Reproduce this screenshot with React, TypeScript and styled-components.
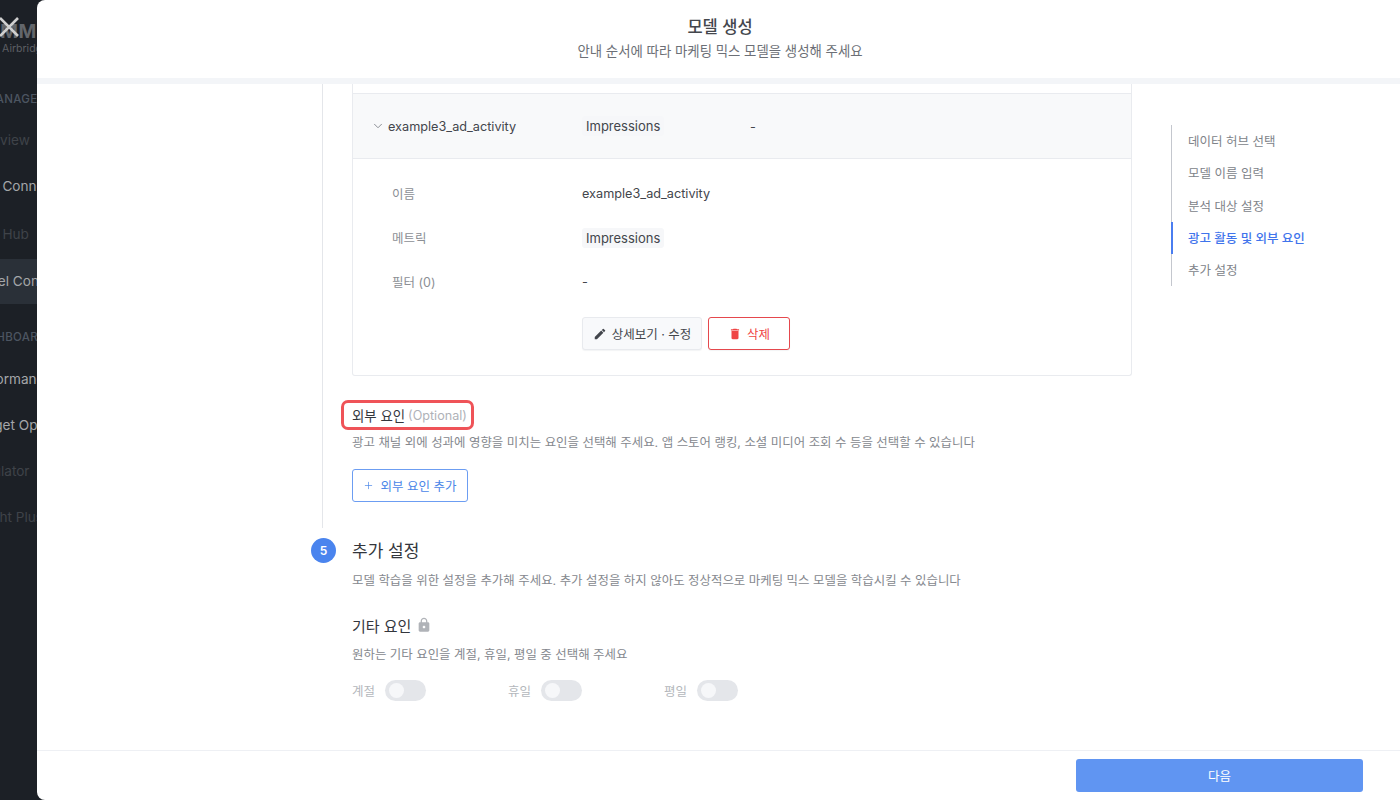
import React from "react";
import styled, { createGlobalStyle } from "styled-components";
import { MdEdit, MdDelete, MdLock } from "react-icons/md";
import { ChevronDown, Plus } from "lucide-react";

const GlobalStyle = createGlobalStyle`
  html, body {
    margin: 0;
    height: 100%;
    overflow: hidden;
    background: #1c2026;
    font-family: Inter, "Noto Sans CJK KR", "Noto Sans", sans-serif;
  }
  * { box-sizing: border-box; }
`;

const Page = styled.div`
  position: relative;
  width: 1400px;
  height: 800px;
  overflow: hidden;
  background: #1c2026;
`;

/* sidebar sitting behind the modal, almost fully covered */
const Sidebar = styled.aside`
  width: 37px;
  height: 800px;
  overflow: hidden;
  white-space: nowrap;
  display: flex;
  flex-direction: column;
  padding-top: 22px;
`;

const Logo = styled.div`
  margin-left: -18px;
  height: 20px;
  line-height: 20px;
  font-size: 19px;
  font-weight: 700;
  letter-spacing: 0.5px;
  color: #63666b;
`;

const LogoSub = styled.div`
  margin: 0 0 0 -13px;
  height: 14px;
  line-height: 14px;
  font-size: 10.5px;
  color: #5c5f64;
`;

const SectionLabel = styled.div<{ $shift: number; $top: number }>`
  margin: ${(p) => p.$top}px 0 0 ${(p) => p.$shift}px;
  height: 16px;
  line-height: 16px;
  font-size: 11.5px;
  font-weight: 500;
  letter-spacing: 0.3px;
  color: #4c5561;
`;

const NavItem = styled.div<{ $dim?: boolean; $active?: boolean; $h?: number; $top?: number }>`
  flex: none;
  height: ${(p) => p.$h ?? 46}px;
  line-height: ${(p) => p.$h ?? 46}px;
  margin-top: ${(p) => p.$top ?? 0}px;
  text-indent: -31px;
  font-size: 13.6px;
  color: ${(p) => (p.$dim ? "#3f4349" : "#a4a6a9")};
  background: ${(p) => (p.$active ? "#2a3038" : "transparent")};
`;

const CloseIcon = styled.svg`
  position: absolute;
  left: -3px;
  top: 15px;
  width: 24px;
  height: 24px;
  color: #cfcfcf;
`;

const Modal = styled.div`
  position: absolute;
  left: 37px;
  top: 0;
  width: 1363px;
  height: 800px;
  background: #fff;
  border-radius: 8px 0 0 8px;
  display: flex;
  flex-direction: column;
  overflow: hidden;
`;

const Header = styled.header`
  flex: none;
  height: 84px;
  border-bottom: 6px solid #f3f5f8;
  display: flex;
  flex-direction: column;
  align-items: center;
  padding: 16px 0 0 3px;
`;

const HeaderTitle = styled.h1`
  margin: 0;
  height: 22px;
  line-height: 22px;
  font-size: 16.5px;
  font-weight: 500;
  color: #44474d;
`;

const HeaderSub = styled.p`
  margin: 3px 0 0;
  height: 20px;
  line-height: 20px;
  font-size: 13.4px;
  color: #6c6f76;
`;

const Body = styled.div`
  flex: 1;
  min-height: 0;
  display: flex;
  overflow: hidden;
`;

const Main = styled.main`
  width: 1095px;
  flex: none;
`;

const StepBody = styled.section`
  margin-left: 285px;
  height: 444px;
  padding-left: 29px;
  border-left: 1px solid #e4e6ea;
`;

const Card = styled.div`
  border: 1px solid #e9ebef;
  border-top: none;
  border-radius: 0 0 3px 3px;
  height: 292px;
  padding-top: 9px;
`;

const SummaryRow = styled.div`
  height: 66px;
  display: flex;
  align-items: center;
  background: #f8f9fa;
  border-top: 1px solid #e9ebef;
  border-bottom: 1px solid #e9ebef;
  padding-left: 18px;
  font-size: 12.7px;
  color: #43464c;
`;

const Chevron = styled(ChevronDown)`
  width: 14px;
  height: 14px;
  margin-right: 3px;
  color: #7d8087;
`;

const SummaryName = styled.span`
  width: 194px;
`;

const SummaryMetric = styled.span`
  width: 168px;
`;

const DetailList = styled.div`
  padding: 12px 0 0 39px;
`;

const DetailRow = styled.div`
  height: 44.3px;
  display: flex;
  align-items: center;
`;

const DetailLabel = styled.span`
  width: 190px;
  font-size: 12.5px;
  color: #8c8f95;
`;

const DetailValue = styled.span`
  font-size: 12.7px;
  color: #43464c;
`;

const Chip = styled.span`
  display: inline-block;
  height: 20px;
  line-height: 20px;
  padding: 0 4px;
  border-radius: 3px;
  background: #f6f7f9;
  font-size: 13px;
  color: #43464c;
`;

const DetailChip = styled(Chip)`
  margin-top: 1px;
`;

const Actions = styled.div`
  display: flex;
  gap: 6px;
  margin: 13.5px 0 0 190px;
`;

const GhostButton = styled.button<{ $w: number; $danger?: boolean }>`
  width: ${(p) => p.$w}px;
  height: 33px;
  padding: 0;
  display: flex;
  align-items: center;
  justify-content: center;
  gap: 5px;
  border-radius: 3px;
  font: inherit;
  font-size: 12.5px;
  border: 1px solid ${(p) => (p.$danger ? "#e5484d" : "#e8eaee")};
  background: ${(p) => (p.$danger ? "#fff" : "#f8f9fb")};
  color: ${(p) => (p.$danger ? "#ef4444" : "#43464c")};
  box-shadow: 0 1px 1px rgba(20, 30, 50, 0.05);

  svg {
    width: 14px;
    height: 14px;
  }
`;

const HighlightTitle = styled.div`
  display: inline-flex;
  align-items: center;
  gap: 3px;
  height: 30px;
  margin: 24px 0 0 -11px;
  padding: 0 4px 0 8px;
  border: 3px solid #ef5358;
  border-radius: 7px;
  font-size: 13.4px;
  font-weight: 400;
  color: #33363c;
`;

const OptionalText = styled.span`
  font-weight: 400;
  font-size: 12.6px;
  color: #afb2b8;
`;

const Description = styled.p<{ $top: number }>`
  margin: ${(p) => p.$top}px 0 0;
  height: 18px;
  line-height: 18px;
  font-size: 12.45px;
  color: #85888e;
`;

const AddButton = styled.button`
  display: flex;
  align-items: center;
  justify-content: center;
  gap: 6px;
  width: 116px;
  height: 33px;
  margin-top: 17px;
  padding: 0;
  border: 1px solid #6c9df2;
  border-radius: 3px;
  background: #fff;
  font: inherit;
  font-size: 12.5px;
  color: #4a86e8;

  svg {
    width: 11px;
    height: 11px;
  }
`;

const StepHead = styled.div`
  display: flex;
  align-items: center;
  gap: 16px;
  margin-left: 274px;
  height: 24px;
  margin-top: 10px;
`;

const StepNumber = styled.span`
  width: 25px;
  height: 25px;
  border-radius: 50%;
  background: #4a84ee;
  color: #fff;
  font-size: 12px;
  font-weight: 600;
  display: flex;
  align-items: center;
  justify-content: center;
`;

const StepTitle = styled.h2`
  margin: -2px 0 0;
  font-size: 17px;
  font-weight: 400;
  color: #33363c;
`;

const StepContent = styled.div`
  margin-left: 315px;
`;

const SubTitle = styled.h3`
  display: flex;
  align-items: center;
  gap: 5px;
  margin: 24px 0 0;
  height: 22px;
  font-size: 15px;
  font-weight: 400;
  color: #33363c;

  svg {
    width: 16px;
    height: 16px;
    color: #b0b3b8;
  }
`;

const ToggleRow = styled.div`
  display: flex;
  margin-top: 16px;
`;

const ToggleGroup = styled.label`
  width: 156px;
  display: flex;
  align-items: center;
  gap: 10px;
  font-size: 12.5px;
  color: #b4b7bc;
`;

const Toggle = styled.span`
  position: relative;
  width: 41px;
  height: 21px;
  border-radius: 11px;
  background: #e4e6ea;

  &:after {
    content: "";
    position: absolute;
    left: 4px;
    top: 3px;
    width: 15px;
    height: 15px;
    border-radius: 50%;
    background: #f6f7f9;
  }
`;

const SideNav = styled.nav`
  align-self: flex-start;
  margin: 41px 0 0 39px;
  width: 170px;
  display: flex;
  flex-direction: column;
`;

const SideNavItem = styled.div<{ $active?: boolean }>`
  height: 32.3px;
  line-height: 34px;
  padding-left: ${(p) => (p.$active ? 15 : 16)}px;
  border-left: ${(p) => (p.$active ? "2px solid #4a7df0" : "1px solid #c4c7ce")};
  font-size: 12.5px;
  font-weight: ${(p) => (p.$active ? 500 : 400)};
  color: ${(p) => (p.$active ? "#3f74ec" : "#808389")};
`;

const Footer = styled.footer`
  flex: none;
  height: 50px;
  border-top: 1px solid #eef0f4;
  display: flex;
  justify-content: flex-end;
  padding: 8px 37px 0 0;
`;

const NextButton = styled.button`
  width: 287px;
  height: 33px;
  border: none;
  border-radius: 3px;
  background: #6095f2;
  color: #fff;
  font: inherit;
  font-size: 12.5px;
`;

const navSteps = ["데이터 허브 선택", "모델 이름 입력", "분석 대상 설정", "광고 활동 및 외부 요인", "추가 설정"];
const toggles = ["계절", "휴일", "평일"];

export default function App() {
  return (
    <Page>
      <GlobalStyle />
      <Sidebar>
        <Logo>MMM</Logo>
        <LogoSub>by Airbridge</LogoSub>
        <SectionLabel $shift={-15} $top={35}>MANAGER</SectionLabel>
        <NavItem $dim $top={10}>Overview</NavItem>
        <NavItem>Data Connect</NavItem>
        <NavItem $dim $h={50}>Data Hub</NavItem>
        <NavItem $active $h={45}>Model Connect</NavItem>
        <SectionLabel $shift={-28} $top={25}>DASHBOARD</SectionLabel>
        <NavItem $top={11}>Performance</NavItem>
        <NavItem>Budget Optimizer</NavItem>
        <NavItem $dim>Simulator</NavItem>
        <NavItem $dim>Insight Plus</NavItem>
      </Sidebar>
      <CloseIcon viewBox="0 0 24 24" fill="none" stroke="currentColor" strokeWidth="2.6">
        <path d="M3 3 L21 21 M21 3 L3 21" />
      </CloseIcon>

      <Modal>
        <Header>
          <HeaderTitle>모델 생성</HeaderTitle>
          <HeaderSub>안내 순서에 따라 마케팅 믹스 모델을 생성해 주세요</HeaderSub>
        </Header>
        <Body>
          <Main>
            <StepBody>
              <Card>
                <SummaryRow>
                  <Chevron strokeWidth={1.5} />
                  <SummaryName>example3_ad_activity</SummaryName>
                  <SummaryMetric>
                    <Chip>Impressions</Chip>
                  </SummaryMetric>
                  <span>-</span>
                </SummaryRow>
                <DetailList>
                  <DetailRow>
                    <DetailLabel>이름</DetailLabel>
                    <DetailValue>example3_ad_activity</DetailValue>
                  </DetailRow>
                  <DetailRow>
                    <DetailLabel>메트릭</DetailLabel>
                    <DetailChip>Impressions</DetailChip>
                  </DetailRow>
                  <DetailRow>
                    <DetailLabel>필터 (0)</DetailLabel>
                    <DetailValue>-</DetailValue>
                  </DetailRow>
                  <Actions>
                    <GhostButton $w={120}>
                      <MdEdit />
                      상세보기 · 수정
                    </GhostButton>
                    <GhostButton $w={82} $danger>
                      <MdDelete />
                      삭제
                    </GhostButton>
                  </Actions>
                </DetailList>
              </Card>
              <HighlightTitle>
                외부 요인 <OptionalText>(Optional)</OptionalText>
              </HighlightTitle>
              <Description $top={4}>
                광고 채널 외에 성과에 영향을 미치는 요인을 선택해 주세요. 앱 스토어 랭킹, 소셜 미디어 조회 수 등을 선택할 수 있습니다
              </Description>
              <AddButton>
                <Plus strokeWidth={1.5} />
                외부 요인 추가
              </AddButton>
            </StepBody>
            <StepHead>
              <StepNumber>5</StepNumber>
              <StepTitle>추가 설정</StepTitle>
            </StepHead>
            <StepContent>
              <Description $top={10}>
                모델 학습을 위한 설정을 추가해 주세요. 추가 설정을 하지 않아도 정상적으로 마케팅 믹스 모델을 학습시킬 수 있습니다
              </Description>
              <SubTitle>
                기타 요인 <MdLock />
              </SubTitle>
              <Description $top={10}>원하는 기타 요인을 계절, 휴일, 평일 중 선택해 주세요</Description>
              <ToggleRow>
                {toggles.map((t) => (
                  <ToggleGroup key={t}>
                    {t}
                    <Toggle />
                  </ToggleGroup>
                ))}
              </ToggleRow>
            </StepContent>
          </Main>
          <SideNav>
            {navSteps.map((s, i) => (
              <SideNavItem key={s} $active={i === 3}>
                {s}
              </SideNavItem>
            ))}
          </SideNav>
        </Body>
        <Footer>
          <NextButton>다음</NextButton>
        </Footer>
      </Modal>
    </Page>
  );
}
